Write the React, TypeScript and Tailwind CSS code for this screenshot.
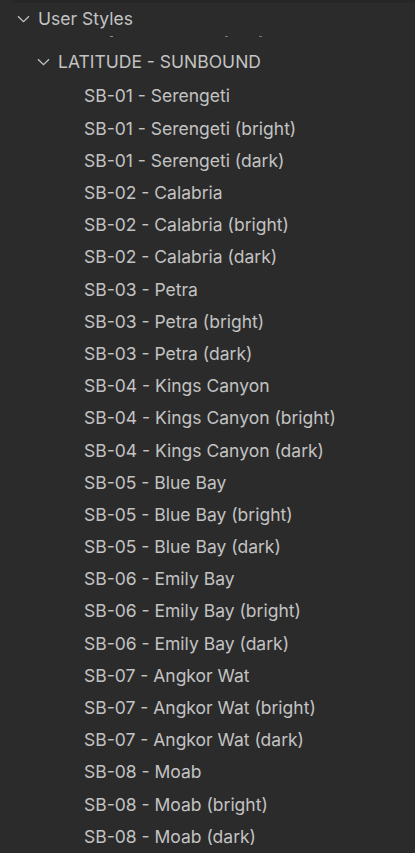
import React from 'react';

const styles = [
  'SB-01 - Serengeti',
  'SB-02 - Calabria',
  'SB-03 - Petra',
  'SB-04 - Kings Canyon',
  'SB-05 - Blue Bay',
  'SB-06 - Emily Bay',
  'SB-07 - Angkor Wat',
  'SB-08 - Moab',
];

const items = styles.flatMap((s) => [s, `${s} (bright)`, `${s} (dark)`]);

const Chevron: React.FC = () => (
  <svg width="13" height="8" viewBox="0 0 13 8" fill="none" className="shrink-0">
    <path d="M1 1.2l5.5 5.5L12 1.2" stroke="#c2c2c2" strokeWidth="1.3" />
  </svg>
);

const App: React.FC = () => {
  return (
    <div
      className="w-[415px] h-[853px] overflow-hidden bg-[#2b2b2b] text-[#c3c3c3] text-[17.5px]"
      style={{ fontFamily: 'Inter, "Liberation Sans", sans-serif' }}
    >
      <div className="h-[3px] ml-[13px] bg-[#262626]" />
      {/* root group */}
      <div className="flex items-center gap-[8px] pl-[17px] h-[32px]">
        <Chevron />
        <span>User Styles</span>
      </div>
      {/* leftovers of a row scrolled under */}
      <div className="relative h-[10px]">
        <div className="absolute top-[1px] left-[110px] w-[3px] h-px bg-[#8a8a8a]" />
        <div className="absolute top-[1px] left-[225px] w-[3px] h-px bg-[#777]" />
        <div className="absolute top-[1px] left-[259px] w-[3px] h-px bg-[#777]" />
      </div>
      <div className="flex items-center gap-[8px] pl-[37px] h-[34px]">
        <Chevron />
        <span>LATITUDE - SUNBOUND</span>
      </div>
      <div className="pt-[1.5px]">
        {items.map((item) => (
          <div key={item} className="h-[32.2px] flex items-center pl-[84px] whitespace-nowrap">
            {item}
          </div>
        ))}
      </div>
    </div>
  );
};

export default App;
